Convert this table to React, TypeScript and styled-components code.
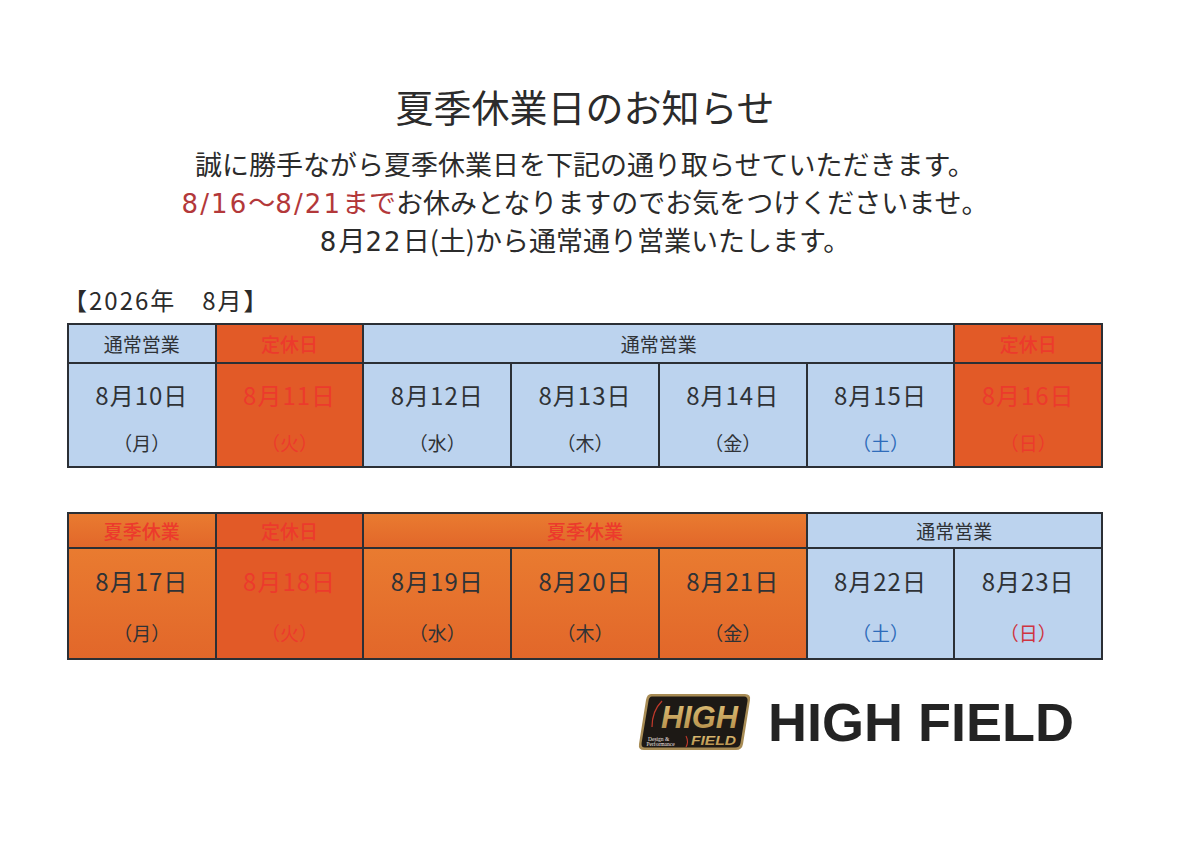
import React from "react";
import styled, { createGlobalStyle } from "styled-components";

const GlobalStyle = createGlobalStyle`
  * { box-sizing: border-box; }
  body {
    margin: 0;
    background: #ffffff;
    font-family: "Noto Sans CJK JP", "Noto Sans", sans-serif;
    color: #2e2e2e;
  }
`;

type Tone = "blue" | "orange" | "amber";
type Ink = "dark" | "red" | "blue" | "rose";

const fills: Record<Tone, string> = {
  blue: "#bcd3ee",
  orange: "#e25a27",
  amber: "linear-gradient(180deg, #e97b30 0%, #e2672a 100%)",
};

const inks: Record<Ink, string> = {
  dark: "#2f3236",
  red: "#ec3a2c",
  blue: "#2f6cba",
  rose: "#cf3440",
};

const Page = styled.div`
  width: 1036px;
  margin-left: 67px;
  padding-top: 83px;
  padding-bottom: 60px;
`;

const Title = styled.h1`
  margin: 0;
  text-align: center;
  font-size: 38px;
  line-height: 46px;
  font-weight: 400;
  color: #2b2b2b;
`;

const Lead = styled.p`
  margin: 16px 0 0;
  text-align: center;
  font-size: 27px;
  line-height: 38px;
  color: #2b2b2b;
`;

// digits in the original print run wider than Noto's
const Num = styled.span<{ $red?: boolean }>`
  font-family: "DejaVu Sans", "Noto Sans CJK JP", sans-serif;
  font-size: 26px;
  line-height: 1;
  letter-spacing: 0.08em;
  color: ${(p) => (p.$red ? "#b3383a" : "inherit")};
`;

const Accent = styled.span`
  color: #b3383a;
`;

const MonthLabel = styled.div`
  margin: 27px 0 9px -4px;
  font-size: 24px;
  line-height: 28px;
  letter-spacing: 2px;
  color: #2b2b2b;
`;

const Grid = styled.div<{ $head: number; $body: number }>`
  display: grid;
  grid-template-columns: repeat(7, 1fr);
  grid-template-rows: ${(p) => p.$head}px ${(p) => p.$body}px;
  border-top: 2px solid #2b2f35;
  border-left: 2px solid #2b2f35;
`;

const HeadCell = styled.div<{ $span: number; $tone: Tone; $ink: Ink }>`
  grid-column: span ${(p) => p.$span};
  display: flex;
  align-items: center;
  justify-content: center;
  background: ${(p) => fills[p.$tone]};
  color: ${(p) => inks[p.$ink]};
  border-right: 2px solid #2b2f35;
  border-bottom: 2px solid #2b2f35;
  font-size: 19px;
  font-weight: ${(p) => (p.$ink === "red" ? 500 : 400)};
`;

const DayCell = styled.div<{ $tone: Tone }>`
  display: grid;
  grid-template-rows: 1fr 1fr;
  align-items: center;
  justify-items: center;
  padding-top: 6px;
  background: ${(p) => fills[p.$tone]};
  border-right: 2px solid #2b2f35;
  border-bottom: 2px solid #2b2f35;
`;

const DateText = styled.span<{ $ink: Ink }>`
  font-size: 24px;
  letter-spacing: 1px;
  color: ${(p) => inks[p.$ink]};
`;

const Weekday = styled.span<{ $ink: Ink }>`
  font-size: 19px;
  color: ${(p) => inks[p.$ink]};
`;

const Spacer = styled.div`
  height: 44px;
`;

const LogoRow = styled.div`
  display: flex;
  align-items: center;
  gap: 16px;
  margin-top: 33px;
  padding-left: 571px;
`;

const Wordmark = styled.span`
  font-family: "Liberation Sans", Arial, sans-serif;
  font-weight: 700;
  font-size: 54px;
  line-height: 56px;
  color: #232323;
`;

interface Head {
  label: string;
  span: number;
  tone: Tone;
  ink: Ink;
}

interface Day {
  date: string;
  week: string;
  tone: Tone;
  dateInk: Ink;
  weekInk: Ink;
}

const firstHead: Head[] = [
  { label: "通常営業", span: 1, tone: "blue", ink: "dark" },
  { label: "定休日", span: 1, tone: "orange", ink: "red" },
  { label: "通常営業", span: 4, tone: "blue", ink: "dark" },
  { label: "定休日", span: 1, tone: "orange", ink: "red" },
];

const firstDays: Day[] = [
  { date: "8月10日", week: "（月）", tone: "blue", dateInk: "dark", weekInk: "dark" },
  { date: "8月11日", week: "（火）", tone: "orange", dateInk: "red", weekInk: "red" },
  { date: "8月12日", week: "（水）", tone: "blue", dateInk: "dark", weekInk: "dark" },
  { date: "8月13日", week: "（木）", tone: "blue", dateInk: "dark", weekInk: "dark" },
  { date: "8月14日", week: "（金）", tone: "blue", dateInk: "dark", weekInk: "dark" },
  { date: "8月15日", week: "（土）", tone: "blue", dateInk: "dark", weekInk: "blue" },
  { date: "8月16日", week: "（日）", tone: "orange", dateInk: "red", weekInk: "red" },
];

const secondHead: Head[] = [
  { label: "夏季休業", span: 1, tone: "amber", ink: "red" },
  { label: "定休日", span: 1, tone: "orange", ink: "red" },
  { label: "夏季休業", span: 3, tone: "amber", ink: "red" },
  { label: "通常営業", span: 2, tone: "blue", ink: "dark" },
];

const secondDays: Day[] = [
  { date: "8月17日", week: "（月）", tone: "amber", dateInk: "dark", weekInk: "dark" },
  { date: "8月18日", week: "（火）", tone: "orange", dateInk: "red", weekInk: "red" },
  { date: "8月19日", week: "（水）", tone: "amber", dateInk: "dark", weekInk: "dark" },
  { date: "8月20日", week: "（木）", tone: "amber", dateInk: "dark", weekInk: "dark" },
  { date: "8月21日", week: "（金）", tone: "amber", dateInk: "dark", weekInk: "dark" },
  { date: "8月22日", week: "（土）", tone: "blue", dateInk: "dark", weekInk: "blue" },
  { date: "8月23日", week: "（日）", tone: "blue", dateInk: "dark", weekInk: "rose" },
];

const WeekTable: React.FC<{ heads: Head[]; days: Day[]; head: number; body: number }> = ({
  heads,
  days,
  head,
  body,
}) => (
  <Grid $head={head} $body={body}>
    {heads.map((h, i) => (
      <HeadCell key={i} $span={h.span} $tone={h.tone} $ink={h.ink}>
        {h.label}
      </HeadCell>
    ))}
    {days.map((d) => (
      <DayCell key={d.date} $tone={d.tone}>
        <DateText $ink={d.dateInk}>{d.date}</DateText>
        <Weekday $ink={d.weekInk}>{d.week}</Weekday>
      </DayCell>
    ))}
  </Grid>
);

const Emblem = () => (
  <svg width="114" height="58" viewBox="0 0 114 58">
    <defs>
      <linearGradient id="gold" x1="0" y1="0" x2="0" y2="1">
        <stop offset="0" stopColor="#e2c27a" />
        <stop offset="1" stopColor="#b08a45" />
      </linearGradient>
    </defs>
    <path
      d="M13 1 L107 1 Q113 1 112 7 L105 51 Q104 57 98 57 L6 57 Q0 57 1 51 L8 7 Q9 1 13 1 Z"
      fill="#a88c55"
    />
    <path
      d="M14 3.5 L106 3.5 Q110 3.5 109.5 8 L102.5 50 Q101.8 54.5 97 54.5 L7 54.5 Q3 54.5 3.6 50 L10.5 8 Q11 3.5 14 3.5 Z"
      fill="#1d1915"
    />
    <path d="M24 8 Q14 18 14 34" stroke="#c0392b" strokeWidth="1.3" fill="none" />
    <path d="M48 43 Q51 49 48 54" stroke="#c0392b" strokeWidth="1.1" fill="none" />
    <text
      x="23"
      y="35"
      fontFamily="Liberation Sans, Arial, sans-serif"
      fontWeight="700"
      fontStyle="italic"
      fontSize="32"
      fill="url(#gold)"
      textLength="77"
      lengthAdjust="spacingAndGlyphs"
    >
      HIGH
    </text>
    <text
      x="53"
      y="52"
      fontFamily="Liberation Sans, Arial, sans-serif"
      fontWeight="700"
      fontStyle="italic"
      fontSize="13"
      fill="url(#gold)"
      textLength="45"
      lengthAdjust="spacingAndGlyphs"
    >
      FIELD
    </text>
    <text x="10" y="47.5" fontFamily="Liberation Serif, serif" fontSize="5.5" fill="#f0e4e0">
      Design &amp;
    </text>
    <text x="8.5" y="53" fontFamily="Liberation Serif, serif" fontSize="5.5" fill="#f0e4e0">
      Performance
    </text>
  </svg>
);

const App: React.FC = () => (
  <>
    <GlobalStyle />
    <Page>
      <Title>夏季休業日のお知らせ</Title>
      <Lead>
        誠に勝手ながら夏季休業日を下記の通り取らせていただきます。
        <br />
        <Accent>
          <Num $red>8/16</Num>～<Num $red>8/21</Num>まで
        </Accent>
        お休みとなりますのでお気をつけくださいませ。
        <br />
        <Num>8</Num>月<Num>22</Num>日(土)から通常通り営業いたします。
      </Lead>
      <MonthLabel>【2026年　8月】</MonthLabel>
      <WeekTable heads={firstHead} days={firstDays} head={39} body={104} />
      <Spacer />
      <WeekTable heads={secondHead} days={secondDays} head={35} body={111} />
      <LogoRow>
        <Emblem />
        <Wordmark>HIGH FIELD</Wordmark>
      </LogoRow>
    </Page>
  </>
);

export default App;
